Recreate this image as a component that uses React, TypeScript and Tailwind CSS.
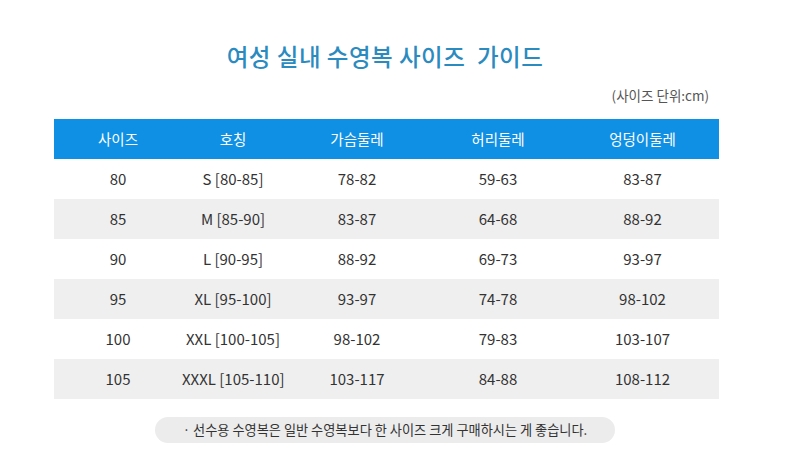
const rows = [
  ["80", "S [80-85]", "78-82", "59-63", "83-87"],
  ["85", "M [85-90]", "83-87", "64-68", "88-92"],
  ["90", "L [90-95]", "88-92", "69-73", "93-97"],
  ["95", "XL [95-100]", "93-97", "74-78", "98-102"],
  ["100", "XXL [100-105]", "98-102", "79-83", "103-107"],
  ["105", "XXXL [105-110]", "103-117", "84-88", "108-112"],
];

const headers = ["사이즈", "호칭", "가슴둘레", "허리둘레", "엉덩이둘레"];

export default function App() {
  return (
    <div
      className="w-[800px] h-[454px] bg-white overflow-hidden"
      style={{ fontFamily: '"Noto Sans CJK KR", "Noto Sans", sans-serif' }}
    >
      <div className="pt-[40px] flex justify-center pr-[30px]">
        <h1 className="text-[23.5px] leading-[32px] font-medium text-[#2b8bbf] tracking-[0.5px]">
          여성 실내 수영복 사이즈&nbsp; 가이드
        </h1>
      </div>
      <div className="flex justify-end pr-[91px] mt-[14px]">
        <span className="text-[13.5px] leading-[18px] text-[#555]">(사이즈 단위:cm)</span>
      </div>
      <div className="ml-[54px] mt-[15px] w-[665px]">
        <div className="grid grid-cols-[128px_102px_146px_136px_153px] h-[40px] bg-[#1090e4] items-center text-white text-[14.5px]">
          {headers.map((h) => (
            <div key={h} className="text-center">
              {h}
            </div>
          ))}
        </div>
        {rows.map((r, i) => (
          <div
            key={r[0]}
            className={
              "grid grid-cols-[128px_102px_146px_136px_153px] h-[40px] items-center text-[15px] text-[#333] " +
              (i % 2 === 1 ? "bg-[#efefef]" : "bg-white")
            }
          >
            {r.map((c, j) => (
              <div key={j} className="text-center whitespace-nowrap">
                {c}
              </div>
            ))}
          </div>
        ))}
      </div>
      <div className="flex justify-center mt-[18px] pr-[30px]">
        <div className="w-[460px] h-[26px] rounded-full bg-[#ececec] flex items-center justify-center text-[13.2px] text-[#333]">
          · 선수용 수영복은 일반 수영복보다 한 사이즈 크게 구매하시는 게 좋습니다.
        </div>
      </div>
    </div>
  );
}
